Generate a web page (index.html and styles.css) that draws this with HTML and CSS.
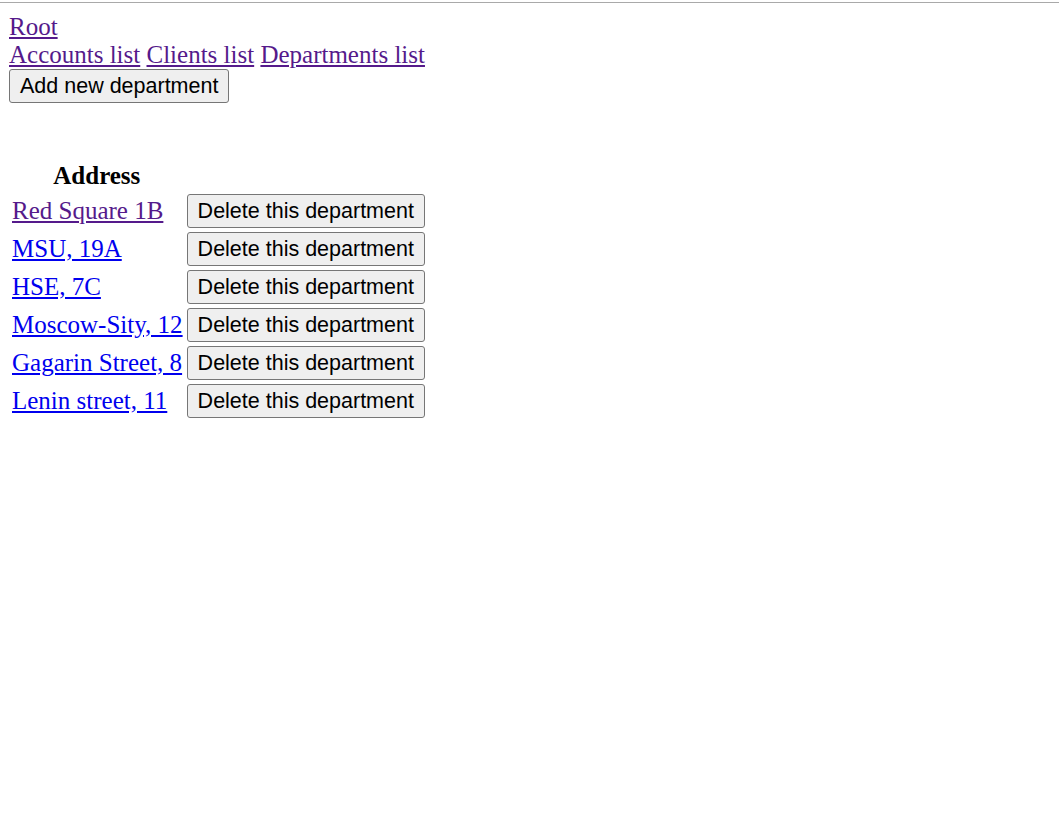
FILE: index.html
```html
<!DOCTYPE html>
<html>
<head>
<meta charset="utf-8">
<title>Departments</title>
<link rel="stylesheet" href="styles.css">
</head>
<body>
<div class="topline"></div>
<div class="page">
  <div class="nav-line"><a class="visited" href="#">Root</a></div>
  <div class="nav-line">
    <a class="visited" href="#">Accounts list</a>
    <a class="visited" href="#">Clients list</a>
    <a class="visited" href="#">Departments list</a>
  </div>
  <div class="actions"><button class="btn">Add new department</button></div>
  <table class="dept-table">
    <thead>
      <tr><th>Address</th><th></th></tr>
    </thead>
    <tbody>
      <tr><td><a class="visited" href="#">Red Square 1B</a></td><td><button class="btn">Delete this department</button></td></tr>
      <tr><td><a href="#">MSU, 19A</a></td><td><button class="btn">Delete this department</button></td></tr>
      <tr><td><a href="#">HSE, 7C</a></td><td><button class="btn">Delete this department</button></td></tr>
      <tr><td><a href="#">Moscow-Sity, 12</a></td><td><button class="btn">Delete this department</button></td></tr>
      <tr><td><a href="#">Gagarin Street, 8</a></td><td><button class="btn">Delete this department</button></td></tr>
      <tr><td><a href="#">Lenin street, 11</a></td><td><button class="btn">Delete this department</button></td></tr>
    </tbody>
  </table>
</div>
</body>
</html>
```

FILE: styles.css
```css
html, body {
  margin: 0;
  padding: 0;
  background: #fff;
}
body {
  font-family: "Liberation Serif", "Times New Roman", serif;
  font-size: 25px;
  color: #000;
}
.topline {
  margin-top: 2px;
  height: 0;
  border-top: 1px solid #a9a9a9;
}
.page {
  padding: 10px 8px 8px 9px;
}
.nav-line {
  line-height: 28px;
  height: 28px;
}
a {
  color: #0000ee;
  text-decoration: underline;
}
a.visited {
  color: #551a8b;
}
.actions {
  height: 34px;
}
.btn {
  font-family: "Liberation Sans", Arial, sans-serif;
  font-size: 21.5px;
  line-height: 24px;
  color: #000;
  background: #efefef;
  border: 1px solid #767676;
  border-radius: 3px;
  padding: 4px 10px;
  margin: 0;
  height: 34px;
}
.dept-table {
  margin-top: 55px;
  margin-left: -1px;
  border-collapse: separate;
  border-spacing: 3px 4px;
}
.dept-table th {
  font-weight: bold;
  text-align: center;
  padding: 0 1px;
  line-height: 28px;
}
.dept-table td {
  padding: 0 1px;
  white-space: nowrap;
  vertical-align: middle;
}
.dept-table td:first-child {
  padding-right: 0;
}
```
